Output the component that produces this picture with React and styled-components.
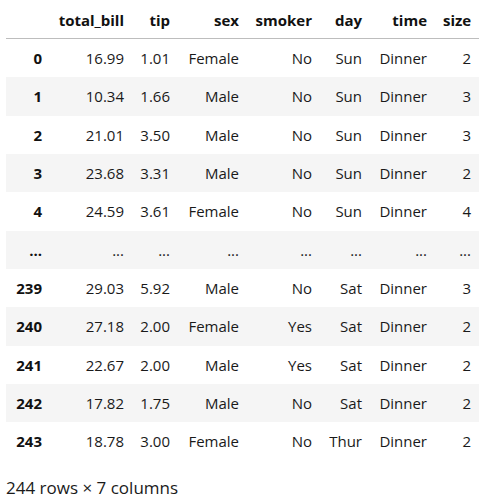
import React from 'react';
import styled, { createGlobalStyle } from 'styled-components';

const GlobalStyle = createGlobalStyle`
  body {
    margin: 0;
    background: #fff;
    font-family: "Open Sans", "Noto Sans", sans-serif;
    color: #1a1a1a;
  }
`;

const Wrapper = styled.div`
  padding: 1px 0 0 6px;
`;

const Table = styled.table`
  border-collapse: collapse;
  border-spacing: 0;
  table-layout: fixed;
  width: 473px;
  font-size: 15px;
`;

const HeadCell = styled.th`
  height: 37px;
  padding: 0 8px;
  text-align: right;
  font-weight: 700;
  color: #111;
  border-bottom: 1px solid #bdbdbd;
  white-space: nowrap;
`;

const Row = styled.tr`
  background: ${(p) => (p.$striped ? '#f5f5f5' : '#fff')};
`;

const IndexCell = styled.th`
  height: 38.33px;
  padding: 0 8px;
  text-align: right;
  font-weight: 700;
  color: #111;
  white-space: nowrap;
`;

const Cell = styled.td`
  height: 38.33px;
  padding: 0 8px;
  text-align: right;
  white-space: nowrap;
`;

const Footer = styled.p`
  margin: 18px 0 0;
  font-size: 17px;
  line-height: 18px;
  color: #1a1a1a;
`;

const columns = ['total_bill', 'tip', 'sex', 'smoker', 'day', 'time', 'size'];
const widths = [44, 82, 46, 69, 73, 50, 65, 44];

const rows = [
  ['0', '16.99', '1.01', 'Female', 'No', 'Sun', 'Dinner', '2'],
  ['1', '10.34', '1.66', 'Male', 'No', 'Sun', 'Dinner', '3'],
  ['2', '21.01', '3.50', 'Male', 'No', 'Sun', 'Dinner', '3'],
  ['3', '23.68', '3.31', 'Male', 'No', 'Sun', 'Dinner', '2'],
  ['4', '24.59', '3.61', 'Female', 'No', 'Sun', 'Dinner', '4'],
  ['...', '...', '...', '...', '...', '...', '...', '...'],
  ['239', '29.03', '5.92', 'Male', 'No', 'Sat', 'Dinner', '3'],
  ['240', '27.18', '2.00', 'Female', 'Yes', 'Sat', 'Dinner', '2'],
  ['241', '22.67', '2.00', 'Male', 'Yes', 'Sat', 'Dinner', '2'],
  ['242', '17.82', '1.75', 'Male', 'No', 'Sat', 'Dinner', '2'],
  ['243', '18.78', '3.00', 'Female', 'No', 'Thur', 'Dinner', '2'],
];

const App = () => (
  <>
    <GlobalStyle />
    <Wrapper>
      <Table>
        <colgroup>
          {widths.map((w, i) => (
            <col key={i} style={{ width: w }} />
          ))}
        </colgroup>
        <thead>
          <tr>
            <HeadCell />
            {columns.map((c) => (
              <HeadCell key={c}>{c}</HeadCell>
            ))}
          </tr>
        </thead>
        <tbody>
          {rows.map(([idx, ...vals], i) => (
            <Row key={i} $striped={i % 2 === 1}>
              <IndexCell>{idx}</IndexCell>
              {vals.map((v, j) => (
                <Cell key={j}>{v}</Cell>
              ))}
            </Row>
          ))}
        </tbody>
      </Table>
      <Footer>244 rows × 7 columns</Footer>
    </Wrapper>
  </>
);

export default App;
